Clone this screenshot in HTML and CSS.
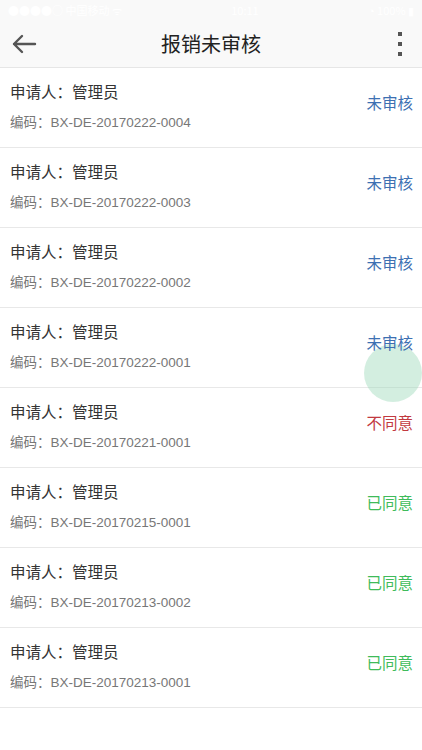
FILE: index.html
```html
<!DOCTYPE html>
<html lang="zh-CN">
<head>
  <meta charset="UTF-8" />
  <meta name="viewport" content="width=device-width, initial-scale=1.0" />
  <title>报销未审核</title>
  <link rel="stylesheet" href="styles.css">
</head>
<body>
  <div class="statusbar">
    <span>●●●●○ 中国移动 ᯤ</span>
    <span>10:11</span>
    <span>◔ 100% ▮</span>
  </div>
  <div class="navbar">
    <svg class="nav-back" width="26" height="20" viewBox="0 0 26 20">
      <path d="M24 10H3M11 2L3 10l8 8" fill="none" stroke="#555" stroke-width="2.4" stroke-linecap="round" stroke-linejoin="round"/>
    </svg>
    <div class="nav-title">报销未审核</div>
    <div class="nav-more"><i></i><i></i><i></i></div>
  </div>

  <div class="list">
    <div class="item">
      <div class="info">
        <div class="who">申请人：管理员</div>
        <div class="code">编码：BX-DE-20170222-0004</div>
      </div>
      <div class="state pending">未审核</div>
    </div>
    <div class="item">
      <div class="info">
        <div class="who">申请人：管理员</div>
        <div class="code">编码：BX-DE-20170222-0003</div>
      </div>
      <div class="state pending">未审核</div>
    </div>
    <div class="item">
      <div class="info">
        <div class="who">申请人：管理员</div>
        <div class="code">编码：BX-DE-20170222-0002</div>
      </div>
      <div class="state pending">未审核</div>
    </div>
    <div class="item">
      <div class="info">
        <div class="who">申请人：管理员</div>
        <div class="code">编码：BX-DE-20170222-0001</div>
      </div>
      <div class="state pending">未审核</div>
      <span class="ripple"></span>
    </div>
    <div class="item">
      <div class="info">
        <div class="who">申请人：管理员</div>
        <div class="code">编码：BX-DE-20170221-0001</div>
      </div>
      <div class="state rejected">不同意</div>
    </div>
    <div class="item">
      <div class="info">
        <div class="who">申请人：管理员</div>
        <div class="code">编码：BX-DE-20170215-0001</div>
      </div>
      <div class="state approved">已同意</div>
    </div>
    <div class="item">
      <div class="info">
        <div class="who">申请人：管理员</div>
        <div class="code">编码：BX-DE-20170213-0002</div>
      </div>
      <div class="state approved">已同意</div>
    </div>
    <div class="item">
      <div class="info">
        <div class="who">申请人：管理员</div>
        <div class="code">编码：BX-DE-20170213-0001</div>
      </div>
      <div class="state approved">已同意</div>
    </div>
  </div>
</body>
</html>
```

FILE: styles.css
```css
body {
  margin: 0;
  background: #fff;
  font-family: "Noto Sans CJK SC", "Noto Sans", sans-serif;
  overflow: hidden;
}
.statusbar {
  height: 20px;
  background: #f9f9f9;
  color: #fff;
  font-size: 11px;
  line-height: 20px;
  display: flex;
  justify-content: space-between;
  padding: 0 8px;
}
.navbar {
  height: 47px;
  background: #f9f9f9;
  border-bottom: 1px solid #e6e6e6;
  display: flex;
  align-items: center;
  position: relative;
}
.nav-back {
  margin-left: 11px;
}
.nav-title {
  position: absolute;
  left: 0; right: 0;
  text-align: center;
  font-size: 20px;
  color: #222;
  line-height: 47px;
  pointer-events: none;
}
.nav-more {
  margin-left: auto;
  margin-right: 20px;
  display: flex;
  flex-direction: column;
  gap: 6px;
}
.nav-more i {
  width: 4px;
  height: 4px;
  background: #555;
}
.item {
  height: 79px;
  border-bottom: 1px solid #e8e8e8;
  display: flex;
  align-items: flex-start;
  padding: 0 9px 0 10px;
  position: relative;
}
.info {
  flex: 1;
  padding-top: 13px;
}
.who {
  font-size: 15.5px;
  line-height: 20px;
  color: #333;
}
.code {
  margin-top: 12px;
  font-size: 13.5px;
  line-height: 20px;
  color: #777;
  font-family: "Liberation Sans", "Noto Sans CJK SC", sans-serif;
}
.state {
  padding-top: 24px;
  font-size: 15.5px;
  line-height: 20px;
  position: relative;
  z-index: 1;
}
.pending { color: #3d70b2; }
.rejected { color: #c23a3f; }
.approved { color: #3fbb5a; }
.ripple {
  position: absolute;
  left: 364px;
  top: 36px;
  width: 58px;
  height: 58px;
  border-radius: 50%;
  background: rgba(150, 215, 180, 0.42);
}
```
